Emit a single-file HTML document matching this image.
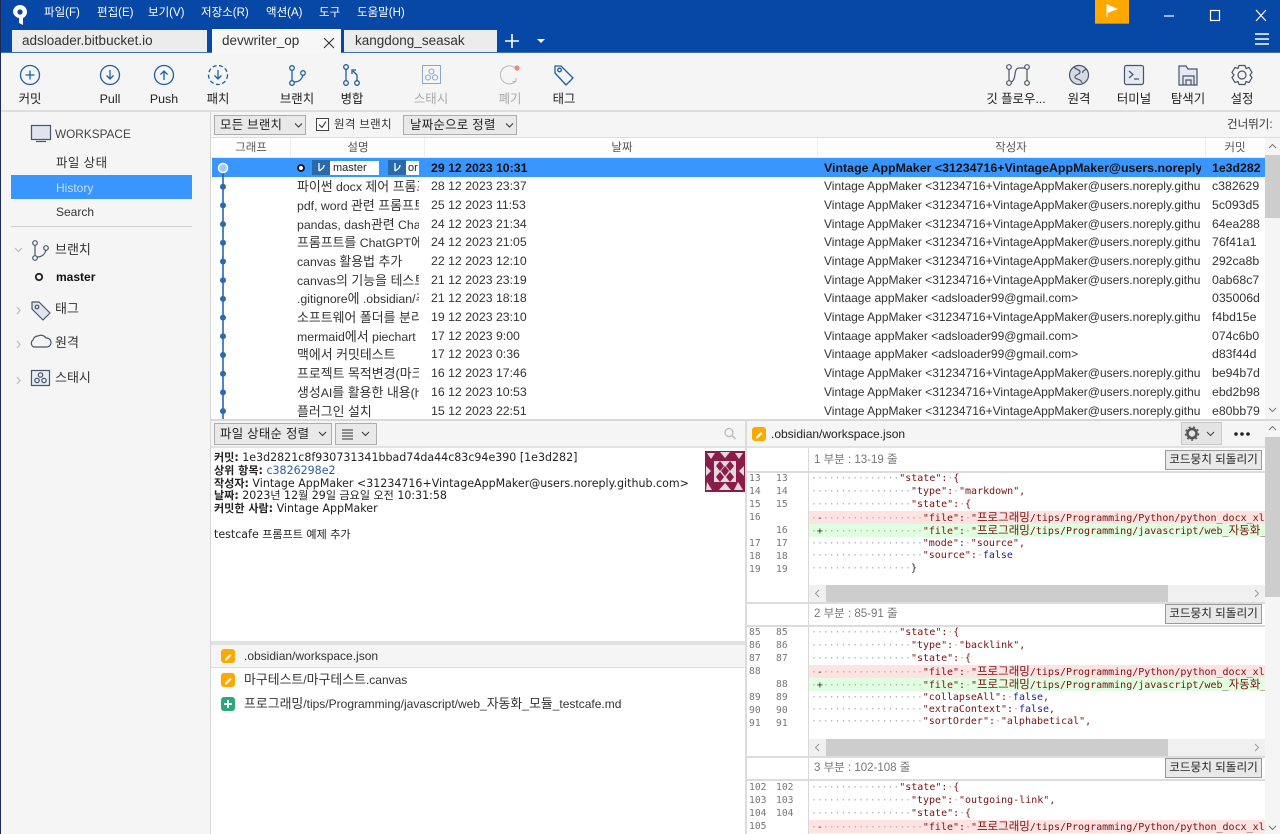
<!DOCTYPE html>
<html lang="ko"><head><meta charset="utf-8"><title>Sourcetree</title>
<style>
html,body{margin:0;padding:0;width:1280px;height:834px;overflow:hidden;background:#fff}
body{position:relative;font-family:"Liberation Sans","Noto Sans CJK KR",sans-serif;font-size:12px;color:#222}
.a{position:absolute}
.t{position:absolute;white-space:nowrap;line-height:16px}
.c{transform:translateX(-50%)}
.m{color:#fff;top:5px;font-size:11.5px}
.tab{position:absolute;top:30px;height:22px;background:#ececec;color:#333;font-size:13.5px;line-height:22px}
.tb{color:#222;top:91px;font-size:12.4px}
.btn{position:absolute;background:#e9e9e9;border:1px solid #adadad;box-sizing:border-box;font-size:12.4px;line-height:20px;color:#222;white-space:nowrap;letter-spacing:.3px}
.hd{position:absolute;top:141px;color:#555;font-size:11.5px;line-height:14px;white-space:nowrap}
.clip{position:absolute;overflow:hidden;white-space:nowrap;height:17px;line-height:17px;font-size:12.3px;color:#333}
.clip em,.h em{font-style:normal;font-size:12.9px}
.code{position:absolute;left:811px;width:454px;overflow:hidden;white-space:pre;font-family:"DejaVu Sans Mono","Noto Sans CJK KR",monospace;font-size:10px;line-height:13px;height:13px;color:#7a1010}
.code i{font-style:normal;color:#aab4b4;letter-spacing:-.14px}
.code b{font-weight:normal;color:#1a1a9a}
.code u{text-decoration:none;font-family:"Noto Sans CJK KR",sans-serif;font-size:11.5px;line-height:13px}
.ln{position:absolute;font-family:"DejaVu Sans Mono",monospace;font-size:9.7px;color:#777;line-height:13px}
.bh{position:absolute;left:814px;font-size:11.5px;color:#777;white-space:nowrap;line-height:14px}
.rev{position:absolute;left:1165px;width:97px;height:20px;background:#e9e9e9;border:1px solid #999;box-sizing:border-box;font-size:11.6px;line-height:18px;text-align:center;color:#222;white-space:nowrap}
.sep{position:absolute;left:747px;width:518px;height:2px;background:#dcdcdc}
svg{position:absolute;overflow:visible}
.ic{fill:none;stroke:#1f5f9f;stroke-width:1.3}
.g{fill:none;stroke:#4a5468;stroke-width:1.2}
</style></head><body>

<!-- title bar -->
<div class="a" style="left:0;top:0;width:1280px;height:53px;background:#0747a6"></div>
<div class="a" style="left:0;top:52px;width:1280px;height:1px;background:#3d6fb5"></div>
<svg style="left:11px;top:3px" width="20" height="24"><path d="M9 2a7 7 0 0 1 7 7c0 3-2 5-4 6v7l-4-2v-5a7 7 0 0 1-6-6 7 7 0 0 1 7-7z" fill="#fff"/><circle cx="9" cy="9" r="2.6" fill="#0747a6"/></svg>
<div class="t m" style="left:44px">파일(F)</div>
<div class="t m" style="left:97px">편집(E)</div>
<div class="t m" style="left:148px">보기(V)</div>
<div class="t m" style="left:201px">저장소(R)</div>
<div class="t m" style="left:266px">액션(A)</div>
<div class="t m" style="left:319px">도구</div>
<div class="t m" style="left:357px">도움말(H)</div>
<div class="a" style="left:1095px;top:0;width:34px;height:24px;background:#ffa800;border-bottom:1px solid #c98400;box-sizing:border-box"></div>
<svg style="left:1106px;top:3px" width="14" height="14"><path d="M1 1v13" stroke="#fff"/><path d="M1.5 1.5L12 6 1.5 10z" fill="#fff"/></svg>
<svg style="left:1160px;top:8px" width="110" height="14" fill="none" stroke="#fff" stroke-width="1.2"><path d="M4 8h10"/><rect x="50.5" y="2.5" width="9" height="10"/><path d="M96 2l10 11M106 2L96 13"/></svg>
<div class="tab" style="left:12px;width:195px;padding-left:10px;box-sizing:border-box">adsloader.bitbucket.io</div>
<div class="tab" style="left:212px;top:29px;height:24px;line-height:24px;width:129px;background:#f7f7f7;padding-left:10px;box-sizing:border-box">devwriter_op</div>
<svg style="left:323px;top:37px" width="12" height="12"><path d="M1 1l10 10M11 1L1 11" stroke="#333" stroke-width="1.1" fill="none"/></svg>
<div class="tab" style="left:344px;width:153px;padding-left:11px;box-sizing:border-box">kangdong_seasak</div>
<svg style="left:503px;top:33px" width="46" height="16"><path d="M9 1v14M2 8h14" stroke="#fff" stroke-width="1.6"/><path d="M34 6h8l-4 4z" fill="#fff"/></svg>
<svg style="left:1255px;top:33px" width="15" height="13"><path d="M0 1h14M0 6h14M0 11h14" stroke="#fff" stroke-width="1.4"/></svg>

<!-- toolbar -->
<div class="a" style="left:0;top:53px;width:1280px;height:59px;background:#f5f5f5;border-bottom:2px solid #dedede;box-sizing:border-box"></div>
<svg style="left:0;top:53px" width="1280" height="59">
<g class="ic">
<circle cx="30" cy="22" r="9.5"/><path d="M30 17.5v9M25.5 22h9"/>
<circle cx="110" cy="22" r="9.5"/><path d="M110 17v9M106.5 22.5l3.5 3.5 3.5-3.5"/>
<circle cx="164" cy="22" r="9.5"/><path d="M164 27v-9M160.5 21.5l3.5-3.5 3.5 3.5"/>
<circle cx="218" cy="22" r="9.5" stroke-dasharray="4 2.5"/><path d="M218 17v9M214.5 22.5l3.5 3.5 3.5-3.5"/>
<circle cx="292" cy="15" r="2.3"/><circle cx="292" cy="30" r="2.3"/><circle cx="303" cy="20" r="2.3"/><path d="M292 17v11M294 29c5 0 8-3 9-7"/>
<circle cx="346" cy="14" r="2.3"/><circle cx="346" cy="30" r="2.3"/><circle cx="357" cy="30" r="2.3"/><path d="M346 16.5v11.500M357 28v-6l-4-4M352 21v-4h4"/>
</g>
<g fill="none" stroke="#8ca7c4" stroke-width="1"><rect x="422.5" y="12.5" width="18" height="18"/><circle cx="431.5" cy="18.5" r="2.5"/><circle cx="428" cy="24.5" r="2.5"/><circle cx="435" cy="24.5" r="2.5"/>
<path d="M517 17a9 9 0 1 0-1 11M516 25v3.500h-3.500" stroke="#b9b9b9"/></g>
<circle cx="517" cy="15" r="2.6" fill="#f38a78"/>
<path class="ic" d="M555 13h6l12 12-7 7-11-12z" stroke-linejoin="round"/><circle class="ic" cx="559.5" cy="17" r="1.8"/>
<g class="g"><circle cx="1009" cy="14" r="2.3"/><circle cx="1009" cy="30" r="2.3"/><circle cx="1027" cy="14" r="2.3"/><circle cx="1027" cy="30" r="2.3"/><path d="M1009 16.500v11M1027 16.500v11M1011 29c6-2 2-14 8-14h6"/>
<circle cx="1079" cy="22" r="9.5" fill="#d5dae4"/><path d="M1074 14c3 4 6 2 6 5s-5 2-5 5 6 1 7 6M1086 16c-2 2-4 2-3 4"/>
<rect x="1124.5" y="12.5" width="19" height="19" rx="2" fill="#e6e9f0"/><path d="M1129 18l4 3.500-4 3.500M1134 26h5"/>
<path d="M1179 13h7l2 3h9v16h-18z" fill="#e6e9f0"/><path d="M1183 32v-9h11v9M1186 32v-5h5v5"/>
<circle cx="1242" cy="22" r="4"/><path d="M1239 12.500h6l1 3 3-1 3 5-2 2.500 2 2.500-3 5-3-1-1 3h-6l-1-3-3 1-3-5 2-2.500-2-2.500 3-5 3 1z"/></g>
</svg>
<div class="t c tb" style="left:30px">커밋</div>
<div class="t c tb" style="left:110px">Pull</div>
<div class="t c tb" style="left:164px">Push</div>
<div class="t c tb" style="left:218px">패치</div>
<div class="t c tb" style="left:297px">브랜치</div>
<div class="t c tb" style="left:352px">병합</div>
<div class="t c tb" style="left:431px;color:#aaa">스태시</div>
<div class="t c tb" style="left:510px;color:#aaa">폐기</div>
<div class="t c tb" style="left:564px">태그</div>
<div class="t c tb" style="left:1016px">깃 플로우...</div>
<div class="t c tb" style="left:1079px">원격</div>
<div class="t c tb" style="left:1134px">터미널</div>
<div class="t c tb" style="left:1188px">탐색기</div>
<div class="t c tb" style="left:1242px">설정</div>

<!-- sidebar -->
<div class="a" style="left:0;top:112px;width:211px;height:722px;background:#f5f5f5;border-right:1px solid #d4d4d4;box-sizing:border-box"></div>
<div class="a" style="left:0;top:0;width:1px;height:834px;background:#1a2a50"></div>
<svg style="left:0;top:112px" width="210" height="290">
<g class="g"><rect x="31.5" y="13.5" width="19" height="14" fill="#dfe4ee"/><path d="M36 29.500h10"/>
<circle cx="35" cy="131" r="2.3"/><circle cx="35" cy="146" r="2.3"/><circle cx="46" cy="136" r="2.3"/><path d="M35 133v11M37 145c5 0 8-3 9-7"/>
<path d="M32 190h7l11 11-7 7-11-11z" fill="#dfe4ee" stroke-linejoin="round"/><circle cx="37" cy="195" r="1.8"/>
<path d="M35 237h-1a4 4 0 0 1-1-7 5 5 0 0 1 5-4 6 6 0 0 1 8 2 4.500 4.500 0 0 1 1 9z" transform="translate(0,-2)"/>
<rect x="31.5" y="258.5" width="18" height="15" fill="#e8ebf2"/><circle cx="40.5" cy="263" r="2.2"/><circle cx="37" cy="268.5" r="2.2"/><circle cx="44" cy="268.5" r="2.2"/></g>
<circle cx="39" cy="165" r="3.2" fill="none" stroke="#222" stroke-width="1.8"/>
<path d="M15 136l3.500 3.500 3.500-3.500M17 195l3 3.500-3 3.500M17 229l3 3.500-3 3.500M17 265l3 3.500-3 3.500" fill="none" stroke="#bbb" stroke-width="1.2"/>
</svg>
<div class="t" style="left:55px;top:126px;color:#444;font-size:11.8px">WORKSPACE</div>
<div class="t" style="left:56px;top:155px;color:#333;font-size:12.5px;letter-spacing:.4px">파일 상태</div>
<div class="a" style="left:11px;top:175px;width:181px;height:24px;background:#3a96ff"></div>
<div class="t" style="left:56px;top:180px;color:#c5dfff">History</div>
<div class="t" style="left:56px;top:204px;color:#333">Search</div>
<div class="a" style="left:11px;top:226px;width:181px;height:1px;background:#d0d0d0"></div>
<div class="t" style="left:55px;top:242px;color:#333;font-size:13px">브랜치</div>
<div class="t" style="left:56px;top:269px;color:#111;font-weight:bold">master</div>
<div class="t" style="left:55px;top:301px;color:#333;font-size:13px">태그</div>
<div class="t" style="left:55px;top:335px;color:#333;font-size:13px">원격</div>
<div class="t" style="left:55px;top:370px;color:#333;font-size:13px">스태시</div>

<!-- filter bar -->
<div class="a" style="left:211px;top:112px;width:1069px;height:26px;background:#f5f5f5;border-bottom:1px solid #ddd;box-sizing:border-box"></div>
<div class="btn" style="left:214px;top:115px;width:92px;height:20px;line-height:18px;padding-left:5px">모든 브랜치</div>
<div class="btn" style="left:403px;top:115px;width:114px;height:20px;line-height:18px;padding-left:6px">날짜순으로 정렬</div>
<svg style="left:214px;top:115px" width="310" height="20"><path d="M81 8.500l3.500 3.500 3.500-3.500M292 8.500l3.500 3.500 3.500-3.500" fill="none" stroke="#333"/><rect x="102.5" y="3.500" width="12" height="12" fill="#fff" stroke="#444"/><path d="M105 9.500l3 3 4-6" fill="none" stroke="#333" stroke-width="1.1"/></svg>
<div class="t" style="left:334px;top:117px;font-size:11.5px;color:#333;letter-spacing:.3px">원격 브랜치</div>
<div class="t" style="left:1227px;top:117px;font-size:11.5px;color:#333">건너뛰기:</div>

<!-- column headers -->
<div class="a" style="left:211px;top:138px;width:1054px;height:20px;background:#fff;border-bottom:1px solid #e6e6e6;box-sizing:border-box"></div>
<div class="a" style="left:290px;top:138px;width:1px;height:20px;background:#eee"></div>
<div class="a" style="left:424px;top:138px;width:1px;height:20px;background:#eee"></div>
<div class="a" style="left:817px;top:138px;width:1px;height:20px;background:#eee"></div>
<div class="a" style="left:1205px;top:138px;width:1px;height:20px;background:#eee"></div>
<div class="hd c" style="left:251px">그래프</div>
<div class="hd c" style="left:358px">설명</div>
<div class="hd c" style="left:622px">날짜</div>
<div class="hd c" style="left:1011px">작성자</div>
<div class="hd c" style="left:1235px">커밋</div>

<!-- rows -->
<div class="a" style="left:212px;top:158px;width:1053px;height:19px;background:#3a96ff"></div>
<svg style="left:212px;top:158px" width="100" height="262">
<path d="M11 10V262" stroke="#1f5f9f" stroke-width="1.5"/>
<g fill="#2a6bb0"><circle cx="11" cy="28.7" r="3"/><circle cx="11" cy="47.4" r="3"/><circle cx="11" cy="66.1" r="3"/><circle cx="11" cy="84.8" r="3"/><circle cx="11" cy="103.5" r="3"/><circle cx="11" cy="122.2" r="3"/><circle cx="11" cy="140.9" r="3"/><circle cx="11" cy="159.6" r="3"/><circle cx="11" cy="178.3" r="3"/><circle cx="11" cy="197" r="3"/><circle cx="11" cy="215.7" r="3"/><circle cx="11" cy="234.4" r="3"/><circle cx="11" cy="253.1" r="3"/></g>
<circle cx="11" cy="10" r="4.5" fill="#9cc9ff" stroke="#fff" stroke-width="1.5"/>
<circle cx="89" cy="10" r="3" fill="#fff" stroke="#111" stroke-width="1.8"/>
</svg>
<div class="a" style="left:312px;top:160px;width:18px;height:15px;background:#2a6aa8"></div>
<div class="a" style="left:330px;top:161px;width:49px;height:14px;background:#fff"></div>
<div class="t" style="left:333px;top:160px;font-size:11px;color:#222">master</div>
<div class="a" style="left:388px;top:160px;width:18px;height:15px;background:#2a6aa8"></div>
<div class="a" style="left:406px;top:161px;width:13px;height:14px;background:#fff;overflow:hidden"></div>
<div class="t" style="left:408px;top:160px;font-size:11px;color:#222">or</div>
<svg style="left:312px;top:160px" width="94" height="15"><path d="M7 3v8M12 5c0 3-2 4-5 6M83 3v8M88 5c0 3-2 4-5 6" fill="none" stroke="#fff" stroke-width="1.3"/></svg>

<div class="a" style="left:0;top:1px;width:1280px;height:0">
<div class="clip" style="left:431px;top:159px;width:110px;font-weight:bold;color:#111">29 12 2023 10:31</div>
<div class="clip" style="left:824px;top:159px;width:377px;font-weight:bold;color:#111;font-size:12.4px">Vintage AppMaker &lt;31234716+VintageAppMaker@users.noreply</div>
<div class="clip" style="left:1212px;top:159px;width:50px;font-weight:bold;color:#111">1e3d282</div>

<div class="clip" style="left:297px;top:177px;width:122px"><em>파이썬</em> docx <em>제어 프롬프트</em></div><div class="clip" style="left:431px;top:177px;width:110px">28 12 2023 23:37</div><div class="clip" style="left:824px;top:177px;width:377px;font-size:12px">Vintage AppMaker &lt;31234716+VintageAppMaker@users.noreply.github</div><div class="clip" style="left:1212px;top:177px;width:50px">c382629</div>
<div class="clip" style="left:297px;top:196px;width:122px">pdf, word <em>관련 프롬프트</em></div><div class="clip" style="left:431px;top:196px;width:110px">25 12 2023 11:53</div><div class="clip" style="left:824px;top:196px;width:377px;font-size:12px">Vintage AppMaker &lt;31234716+VintageAppMaker@users.noreply.github</div><div class="clip" style="left:1212px;top:196px;width:50px">5c093d5</div>
<div class="clip" style="left:297px;top:215px;width:122px">pandas, dash<em>관련</em> ChatGPT</div><div class="clip" style="left:431px;top:215px;width:110px">24 12 2023 21:34</div><div class="clip" style="left:824px;top:215px;width:377px;font-size:12px">Vintage AppMaker &lt;31234716+VintageAppMaker@users.noreply.github</div><div class="clip" style="left:1212px;top:215px;width:50px">64ea288</div>
<div class="clip" style="left:297px;top:233px;width:122px"><em>프롬프트를</em> ChatGPT<em>에서</em></div><div class="clip" style="left:431px;top:233px;width:110px">24 12 2023 21:05</div><div class="clip" style="left:824px;top:233px;width:377px;font-size:12px">Vintage AppMaker &lt;31234716+VintageAppMaker@users.noreply.github</div><div class="clip" style="left:1212px;top:233px;width:50px">76f41a1</div>
<div class="clip" style="left:297px;top:252px;width:122px">canvas <em>활용법 추가</em></div><div class="clip" style="left:431px;top:252px;width:110px">22 12 2023 12:10</div><div class="clip" style="left:824px;top:252px;width:377px;font-size:12px">Vintage AppMaker &lt;31234716+VintageAppMaker@users.noreply.github</div><div class="clip" style="left:1212px;top:252px;width:50px">292ca8b</div>
<div class="clip" style="left:297px;top:271px;width:122px">canvas<em>의 기능을 테스트</em></div><div class="clip" style="left:431px;top:271px;width:110px">21 12 2023 23:19</div><div class="clip" style="left:824px;top:271px;width:377px;font-size:12px">Vintage AppMaker &lt;31234716+VintageAppMaker@users.noreply.github</div><div class="clip" style="left:1212px;top:271px;width:50px">0ab68c7</div>
<div class="clip" style="left:297px;top:289px;width:122px">.gitignore<em>에</em> .obsidian/<em>추가</em></div><div class="clip" style="left:431px;top:289px;width:110px">21 12 2023 18:18</div><div class="clip" style="left:824px;top:289px;width:377px;font-size:12px">Vintaage appMaker &lt;adsloader99@gmail.com&gt;</div><div class="clip" style="left:1212px;top:289px;width:50px">035006d</div>
<div class="clip" style="left:297px;top:308px;width:122px"><em>소프트웨어 폴더를 분리</em></div><div class="clip" style="left:431px;top:308px;width:110px">19 12 2023 23:10</div><div class="clip" style="left:824px;top:308px;width:377px;font-size:12px">Vintage AppMaker &lt;31234716+VintageAppMaker@users.noreply.github</div><div class="clip" style="left:1212px;top:308px;width:50px">f4bd15e</div>
<div class="clip" style="left:297px;top:327px;width:122px">mermaid<em>에서</em> piechart</div><div class="clip" style="left:431px;top:327px;width:110px">17 12 2023 9:00</div><div class="clip" style="left:824px;top:327px;width:377px;font-size:12px">Vintaage appMaker &lt;adsloader99@gmail.com&gt;</div><div class="clip" style="left:1212px;top:327px;width:50px">074c6b0</div>
<div class="clip" style="left:297px;top:345px;width:122px"><em>맥에서 커밋테스트</em></div><div class="clip" style="left:431px;top:345px;width:110px">17 12 2023 0:36</div><div class="clip" style="left:824px;top:345px;width:377px;font-size:12px">Vintaage appMaker &lt;adsloader99@gmail.com&gt;</div><div class="clip" style="left:1212px;top:345px;width:50px">d83f44d</div>
<div class="clip" style="left:297px;top:364px;width:122px"><em>프로젝트 목적변경(마크다운</em></div><div class="clip" style="left:431px;top:364px;width:110px">16 12 2023 17:46</div><div class="clip" style="left:824px;top:364px;width:377px;font-size:12px">Vintage AppMaker &lt;31234716+VintageAppMaker@users.noreply.github</div><div class="clip" style="left:1212px;top:364px;width:50px">be94b7d</div>
<div class="clip" style="left:297px;top:383px;width:122px"><em>생성</em>AI<em>를 활용한 내용</em>(h</div><div class="clip" style="left:431px;top:383px;width:110px">16 12 2023 10:53</div><div class="clip" style="left:824px;top:383px;width:377px;font-size:12px">Vintage AppMaker &lt;31234716+VintageAppMaker@users.noreply.github</div><div class="clip" style="left:1212px;top:383px;width:50px">ebd2b98</div>
<div class="clip" style="left:297px;top:402px;width:122px"><em>플러그인 설치</em></div><div class="clip" style="left:431px;top:402px;width:110px">15 12 2023 22:51</div><div class="clip" style="left:824px;top:402px;width:377px;font-size:12px">Vintage AppMaker &lt;31234716+VintageAppMaker@users.noreply.github</div><div class="clip" style="left:1212px;top:402px;width:50px">e80bb79</div>
</div>

<!-- top scrollbar -->
<div class="a" style="left:1265px;top:138px;width:15px;height:281px;background:#f5f5f5"></div>
<div class="a" style="left:1265px;top:155px;width:15px;height:63px;background:#cdcdcd"></div>
<svg style="left:1265px;top:138px" width="15" height="281"><path d="M4 10l3.500-3.500 3.500 3.500M4 270l3.500 3.500 3.500-3.500" fill="none" stroke="#777"/></svg>

<!-- lower left -->
<div class="a" style="left:211px;top:419px;width:1069px;height:2px;background:#d8d8d8"></div>
<div class="a" style="left:211px;top:421px;width:535px;height:27px;background:#f5f5f5;border-bottom:2px solid #e2e2e2;box-sizing:border-box"></div>
<div class="btn" style="left:214px;top:423px;width:118px;height:22px;padding-left:5px">파일 상태순 정렬</div>
<div class="btn" style="left:335px;top:423px;width:42px;height:22px"></div>
<svg style="left:214px;top:423px" width="530" height="22"><path d="M105 9l3.500 3.500L112 9M148 9l3.500 3.500L155 9" fill="none" stroke="#333"/><path d="M128 7h11M128 10h11M128 13h11M128 16h11" stroke="#333"/><circle cx="515" cy="9.500" r="4" fill="none" stroke="#bbb" stroke-width="1.3"/><path d="M518 12.500l3.500 3.500" stroke="#bbb" stroke-width="1.5"/></svg>

<div class="t" style="left:214px;top:452px;font-family:'DejaVu Sans','Noto Sans CJK KR',sans-serif;font-size:11.05px;line-height:12.8px;color:#222"><b>커밋:</b> 1e3d2821c8f930731341bbad74da44c83c94e390 [1e3d282]<br><b>상위 항목:</b> <span style="color:#2a5f9a">c3826298e2</span><br><b>작성자:</b> Vintage AppMaker &lt;31234716+VintageAppMaker@users.noreply.github.com&gt;<br><b>날짜:</b> 2023년 12월 29일 금요일 오전 10:31:58<br><b>커밋한 사람:</b> Vintage AppMaker<br><br>testcafe 프롬프트 예제 추가</div>

<svg style="left:705px;top:451px" width="40" height="41"><rect width="40" height="41" fill="#8a1c4a"/><rect x="9" y="10" width="22" height="21" fill="#e6d8de"/><g fill="#8a1c4a"><path d="M15 10l4 5-4 5-4-5zM25 10l4 5-4 5-4-5zM20 15l4 5-4 5-4-5zM15 21l4 5-4 5-4-5zM25 21l4 5-4 5-4-5z"/></g><g fill="#e6d8de"><path d="M2 2h8l-4 6zM15 1l5 6 5-6zM30 2h8l-4 6zM1 15l5 5-5 5zM39 15l-5 5 5 5zM2 31l5 8H1zM14 39l6-7 6 7zM33 31l5 8h-9z"/></g></svg>

<div class="a" style="left:211px;top:641px;width:535px;height:4px;background:#e2e2e2"></div>
<div class="a" style="left:211px;top:645px;width:535px;height:23px;background:#f5f5f5;border-bottom:1px solid #ddd;box-sizing:border-box"></div>
<svg style="left:221px;top:649px" width="16" height="64"><rect y="0" width="14" height="14" rx="3" fill="#ffa800"/><path d="M4 10l5-5 1.500 1.500-5 5H4z" fill="#fff"/><rect y="24" width="14" height="14" rx="3" fill="#ffa800"/><path d="M4 34l5-5 1.500 1.500-5 5H4z" fill="#fff"/><rect y="48" width="14" height="14" rx="3" fill="#2aa876"/><path d="M7 51v8M3 55h8" stroke="#fff" stroke-width="2"/></svg>
<div class="t h" style="left:244px;top:648px;color:#333">.obsidian/workspace.json</div>
<div class="t h" style="left:244px;top:672px;color:#333"><em>마구테스트</em>/<em>마구테스트</em>.canvas</div>
<div class="t h" style="left:244px;top:696px;color:#333"><em>프로그래밍</em>/tips/Programming/javascript/web_<em>자동화</em>_<em>모듈</em>_testcafe.md</div>

<!-- divider -->
<div class="a" style="left:745px;top:419px;width:2px;height:415px;background:#dcdcdc"></div>

<!-- diff header -->
<div class="a" style="left:747px;top:421px;width:533px;height:27px;background:#f5f5f5;border-bottom:2px solid #e2e2e2;box-sizing:border-box"></div>
<svg style="left:752px;top:427px" width="14" height="14"><rect width="14" height="14" rx="3" fill="#ffa800"/><path d="M4 10l5-5 1.500 1.500-5 5H4z" fill="#fff"/></svg>
<div class="t" style="left:771px;top:426px;color:#222">.obsidian/workspace.json</div>
<div class="a" style="left:1181px;top:422px;width:41px;height:23px;background:#e4e4e4;border:1px solid #c8c8c8;box-sizing:border-box"></div>
<svg style="left:1185px;top:426px" width="75" height="16"><circle cx="7" cy="7.500" r="4.500" fill="none" stroke="#555" stroke-width="2.500"/><circle cx="7" cy="7.500" r="6.500" fill="none" stroke="#555" stroke-width="1.500" stroke-dasharray="2 2.500"/><path d="M22 6l3.500 3.500L29 6" fill="none" stroke="#444"/><circle cx="51" cy="8" r="1.800" fill="#222"/><circle cx="57" cy="8" r="1.800" fill="#222"/><circle cx="63" cy="8" r="1.800" fill="#222"/></svg>

<!-- diff scrollbar -->
<div class="a" style="left:1265px;top:448px;width:15px;height:386px;background:#f5f5f5"></div>
<div class="a" style="left:1265px;top:437px;width:15px;height:160px;background:#cdcdcd"></div>
<svg style="left:1265px;top:421px" width="15" height="413"><path d="M4 9l3.500-3.500L11 9M4 405l3.500 3.500 3.500-3.500" fill="none" stroke="#777"/></svg>

<!-- gutter line -->
<div class="a" style="left:808px;top:448px;width:1px;height:386px;background:#d8d8d8"></div>

<!-- block 1 -->
<div class="bh" style="top:453px">1 부분 : 13-19 줄</div>
<div class="rev" style="top:450px">코드뭉치 되돌리기</div>
<div class="sep" style="top:471px"></div>
<div class="a" style="left:809px;top:511px;width:456px;height:13px;background:#ffe2e2"></div>
<div class="a" style="left:809px;top:524px;width:456px;height:13px;background:#e0ffe0"></div>
<div class="ln" style="left:749px;top:472px">13<br>14<br>15<br>16</div>
<div class="ln" style="left:776px;top:472px">13<br>14<br>15</div>
<div class="ln" style="left:776px;top:524px">16<br>17<br>18<br>19</div>
<div class="ln" style="left:749px;top:537px">17<br>18<br>19</div>
<div class="code" style="top:472px"><i>···············</i>"state":<i>·</i>{</div>
<div class="code" style="top:485px"><i>·················</i>"type":<i>·</i>"markdown",</div>
<div class="code" style="top:498px"><i>·················</i>"state":<i>·</i>{</div>
<div class="code" style="top:511px"><i>·</i><span style="color:#333">-</span><i>·················</i>"file":<i>·</i>"<u>프로그래밍</u>/tips/Programming/Python/python_docx_xl</div>
<div class="code" style="top:524px"><i>·</i><span style="color:#333">+</span><i>·················</i>"file":<i>·</i>"<u>프로그래밍</u>/tips/Programming/javascript/web_<u>자동화</u>_</div>
<div class="code" style="top:537px"><i>···················</i>"mode":<i>·</i>"source",</div>
<div class="code" style="top:549px"><i>···················</i>"source":<i>·</i><b>false</b></div>
<div class="code" style="top:562px"><i>·················</i><span style="color:#222">}</span></div>
<div class="a" style="left:809px;top:585px;width:456px;height:17px;background:#f0f0f0"></div>
<div class="a" style="left:826px;top:585px;width:342px;height:17px;background:#cdcdcd"></div>
<svg style="left:809px;top:585px" width="456" height="17"><path d="M10 5l-3.500 3.500L10 12M446 5l3.500 3.500L446 12" fill="none" stroke="#999"/></svg>
<div class="sep" style="top:602px"></div>

<!-- block 2 -->
<div class="bh" style="top:607px">2 부분 : 85-91 줄</div>
<div class="rev" style="top:604px">코드뭉치 되돌리기</div>
<div class="sep" style="top:625px"></div>
<div class="a" style="left:809px;top:665px;width:456px;height:13px;background:#ffe2e2"></div>
<div class="a" style="left:809px;top:678px;width:456px;height:13px;background:#e0ffe0"></div>
<div class="ln" style="left:749px;top:626px">85<br>86<br>87<br>88</div>
<div class="ln" style="left:776px;top:626px">85<br>86<br>87</div>
<div class="ln" style="left:776px;top:678px">88<br>89<br>90<br>91</div>
<div class="ln" style="left:749px;top:691px">89<br>90<br>91</div>
<div class="code" style="top:626px"><i>···············</i>"state":<i>·</i>{</div>
<div class="code" style="top:639px"><i>·················</i>"type":<i>·</i>"backlink",</div>
<div class="code" style="top:652px"><i>·················</i>"state":<i>·</i>{</div>
<div class="code" style="top:665px"><i>·</i><span style="color:#333">-</span><i>·················</i>"file":<i>·</i>"<u>프로그래밍</u>/tips/Programming/Python/python_docx_xl</div>
<div class="code" style="top:678px"><i>·</i><span style="color:#333">+</span><i>·················</i>"file":<i>·</i>"<u>프로그래밍</u>/tips/Programming/javascript/web_<u>자동화</u>_</div>
<div class="code" style="top:691px"><i>···················</i>"collapseAll":<i>·</i><b>false</b>,</div>
<div class="code" style="top:703px"><i>···················</i>"extraContext":<i>·</i><b>false</b>,</div>
<div class="code" style="top:715px"><i>···················</i>"sortOrder":<i>·</i>"alphabetical",</div>
<div class="a" style="left:809px;top:739px;width:456px;height:17px;background:#f0f0f0"></div>
<div class="a" style="left:826px;top:739px;width:342px;height:17px;background:#cdcdcd"></div>
<svg style="left:809px;top:739px" width="456" height="17"><path d="M10 5l-3.500 3.500L10 12M446 5l3.500 3.500L446 12" fill="none" stroke="#999"/></svg>
<div class="sep" style="top:756px"></div>

<!-- block 3 -->
<div class="bh" style="top:761px">3 부분 : 102-108 줄</div>
<div class="rev" style="top:758px">코드뭉치 되돌리기</div>
<div class="sep" style="top:779px"></div>
<div class="a" style="left:809px;top:820px;width:456px;height:13px;background:#ffe2e2"></div>
<div class="a" style="left:809px;top:833px;width:456px;height:1px;background:#e0ffe0"></div>
<div class="ln" style="left:749px;top:781px">102<br>103<br>104<br>105</div>
<div class="ln" style="left:776px;top:781px">102<br>103<br>104</div>
<div class="code" style="top:781px"><i>···············</i>"state":<i>·</i>{</div>
<div class="code" style="top:794px"><i>·················</i>"type":<i>·</i>"outgoing-link",</div>
<div class="code" style="top:807px"><i>·················</i>"state":<i>·</i>{</div>
<div class="code" style="top:820px"><i>·</i><span style="color:#333">-</span><i>·················</i>"file":<i>·</i>"<u>프로그래밍</u>/tips/Programming/Python/python_docx_xl</div>
</body></html>
